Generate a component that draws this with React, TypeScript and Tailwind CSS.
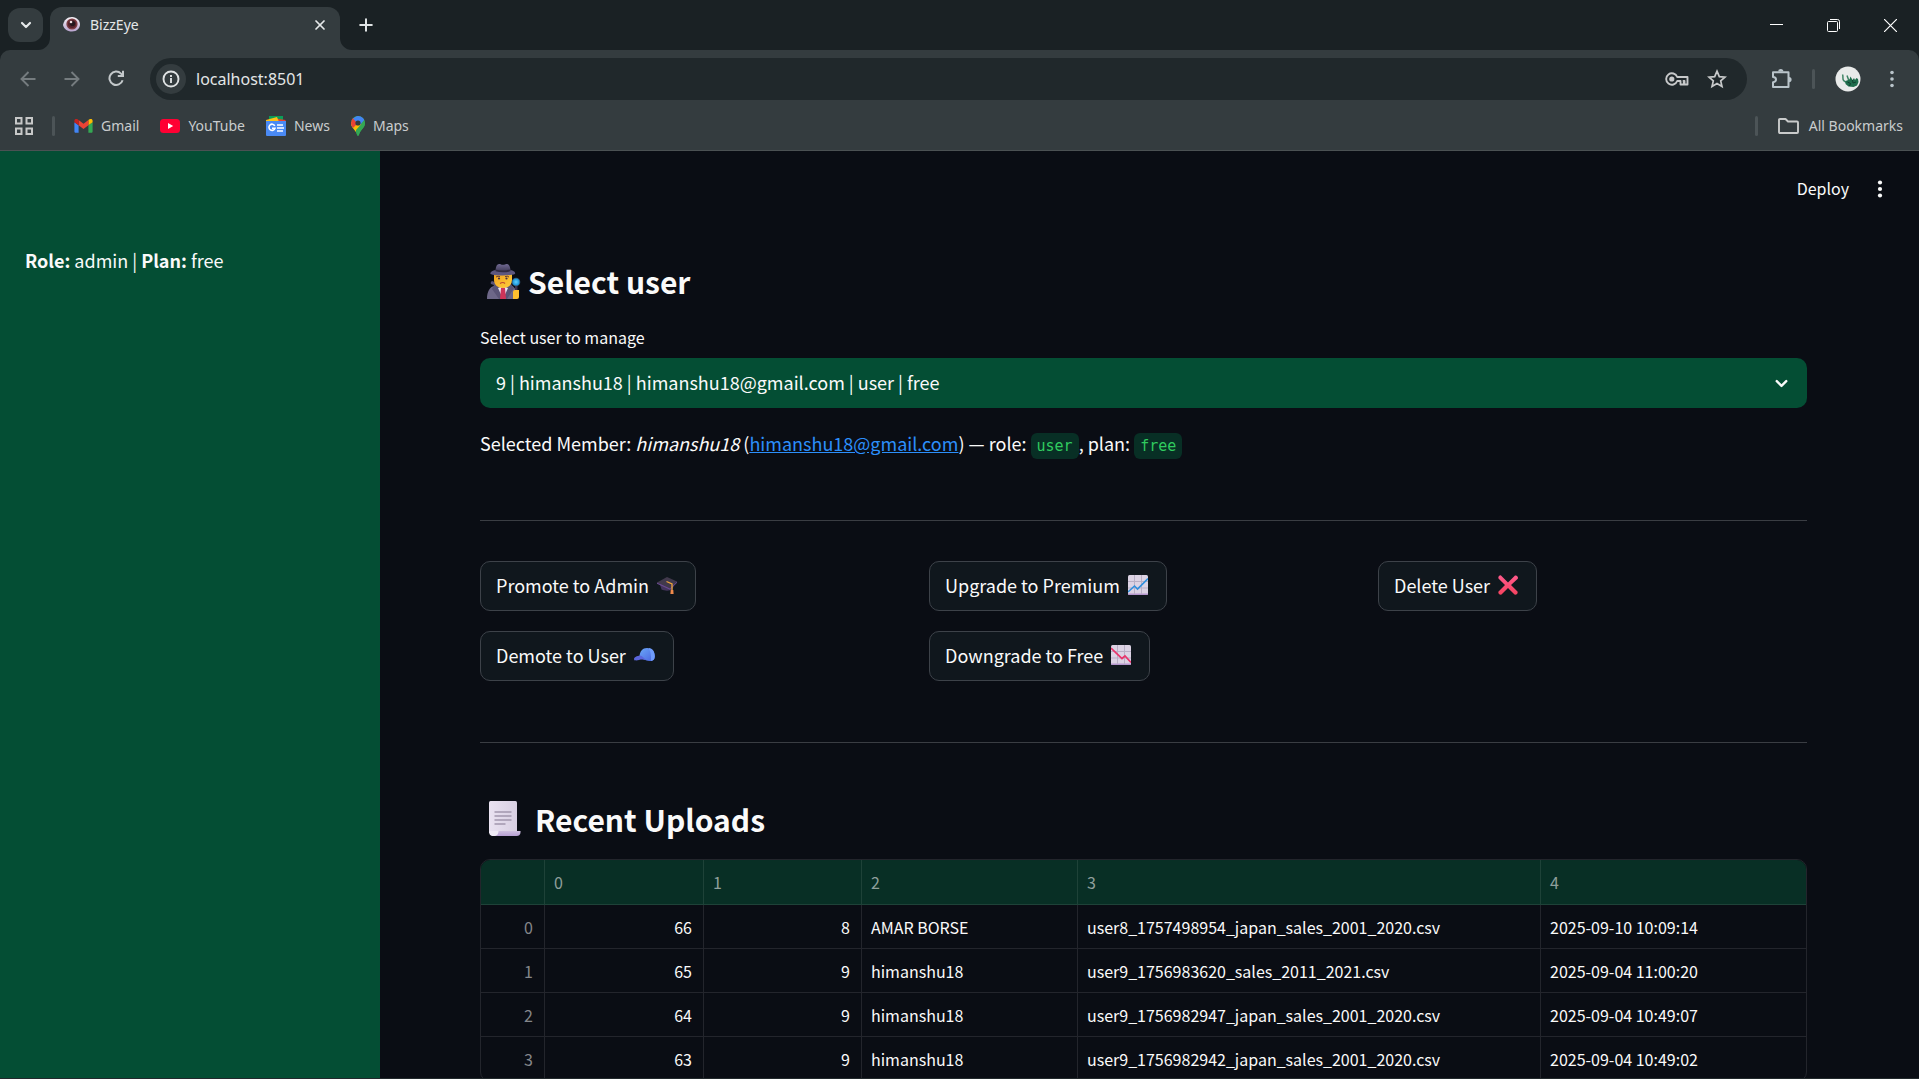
import React from "react";
import { Plus, X, ChevronDown } from "lucide-react";

const SANS = "font-['Noto_Sans_CJK_SC',sans-serif]";

function FavEye() {
  return (
    <svg viewBox="0 0 17 15" className="h-[15px] w-[17px]" aria-hidden="true">
      <defs>
        <linearGradient id="eyeWhite" x1="0" y1="0" x2="0" y2="1">
          <stop offset="0" stopColor="#f7f3f7" />
          <stop offset="1" stopColor="#b9a4cf" />
        </linearGradient>
      </defs>
      <path d="M0 8C1 3 4 0 9 0s8 4 8 7.500-3 7-8 7S1 12 0 8z" fill="url(#eyeWhite)" />
      <circle cx="9" cy="7" r="5.600" fill="#7b3b42" />
      <circle cx="9" cy="7" r="4" fill="#54222a" />
      <circle cx="9.500" cy="6.500" r="2.600" fill="#24171d" />
      <circle cx="8" cy="5" r="1.300" fill="#f0dfe2" />
    </svg>
  );
}

function ArrowIcon({ flip = false }: { flip?: boolean }) {
  return (
    <svg viewBox="0 0 16 16" className={flip ? "size-4 rotate-180" : "size-4"} fill="none" stroke="#757c7f" strokeWidth="1.900" aria-hidden="true">
      <path d="M15.500 8H1.800M8.500 1 1.500 8l7 7" />
    </svg>
  );
}

function ReloadIcon() {
  return (
    <svg viewBox="0 0 17 17" className="size-[17px]" fill="none" aria-hidden="true">
      <path d="M14.600 10.200A6.700 6.700 0 1 1 13 3.600l2 2" stroke="#c3c8ca" strokeWidth="2" />
      <path d="M16 .8V7H9.800V5H14V.8z" fill="#c3c8ca" />
    </svg>
  );
}

function InfoIcon() {
  return (
    <svg viewBox="0 0 18 18" className="size-[18px]" fill="none" aria-hidden="true">
      <circle cx="9" cy="9" r="7.500" stroke="#dfe2e3" strokeWidth="1.900" />
      <path d="M9 8v5M9 5v2" stroke="#dfe2e3" strokeWidth="1.900" strokeDasharray="5" />
    </svg>
  );
}

function KeyIcon() {
  return (
    <svg viewBox="0 0 24 14" className="h-3.5 w-6" fill="none" stroke="#c7c9ca" strokeWidth="1.900" aria-hidden="true">
      <path d="M12.200 5A5.700 5.700 0 1 0 12.200 9H15.500v3.500h3.300V9h-.3 1v3.500H22.500V5z" strokeLinejoin="round" />
      <circle cx="6.800" cy="7" r="2.600" fill="#c7c9ca" stroke="none" />
    </svg>
  );
}

function StarIcon() {
  return (
    <svg viewBox="0 0 20 20" className="size-5" fill="none" stroke="#c7c9ca" strokeWidth="1.700" aria-hidden="true">
      <path d="m10 2.200 2.300 5.400 5.700.5-4.300 3.800 1.300 5.600L10 14.500l-5 3L6.300 11.900 2 8.100l5.700-.5z" />
    </svg>
  );
}

function PuzzleIcon() {
  return (
    <svg viewBox="0 0 21 21" className="size-[21px]" fill="none" aria-hidden="true">
      <path
        d="M2 4.200h15.500v14.800H2v-4.800c4-.2 4-5 0-5.200z"
        stroke="#b9c4ca"
        strokeWidth="2"
        strokeLinejoin="round"
      />
      <path d="M7.200 3.500a2.600 2.600 0 0 1 5.200 0zM18 9a2.600 2.600 0 0 1 0 5.200z" fill="#b9c4ca" />
    </svg>
  );
}

function Dots({ color, r = 1.9 }: { color: string; r?: number }) {
  return (
    <svg viewBox="0 0 6 18" className="h-[18px] w-1.5" fill={color} aria-hidden="true">
      <circle cx="3" cy="2.500" r={r} />
      <circle cx="3" cy="9" r={r} />
      <circle cx="3" cy="15.500" r={r} />
    </svg>
  );
}

function Avatar() {
  return (
    <svg viewBox="0 0 26 26" className="size-[26px]" aria-hidden="true">
      <circle cx="13" cy="13" r="12.500" fill="#e9ebea" />
      <path d="M7.500 8.500c1.300 2.500-.8 4.500 1.500 6.500l2.500 1.500M12 9.500l1.500 4 2 2" fill="none" stroke="#3f8465" strokeWidth="1.500" />
      <path d="M10.500 15l4-1.500 1-3 2 3.500 1.500-2 1 2 1.500-2 1.500 1 .5 3-1.500 3.500-3.500 1.500-5-.5-3-2.500z" fill="#1f6d4c" />
      <path d="m12.500 16 3 1.500-1 2.500M17.500 14l.5 3 3-1" stroke="#11402f" fill="none" />
    </svg>
  );
}

function AppsIcon() {
  return (
    <svg viewBox="0 0 18 18" className="size-[18px]" fill="none" stroke="#c7c8c8" strokeWidth="2" aria-hidden="true">
      <path d="M1 1h5.500v5.500H1zM11.500 1H17v5.500h-5.500zM1 11.500h5.500V17H1zM11.500 11.500H17V17h-5.500z" />
    </svg>
  );
}

function GmailIcon() {
  return (
    <svg viewBox="0 0 52 40" className="h-3.5 w-[19px]" aria-hidden="true">
      <path d="M3.500 39H12V18L0 9v26.500C0 37.500 1.500 39 3.500 39z" fill="#4285f4" />
      <path d="M40 39h8.500c2 0 3.500-1.500 3.500-3.500V9l-12 9z" fill="#34a853" />
      <path d="M40 3v15l12-9V5c0-4.500-5-7-8.500-4.500z" fill="#fbbc04" />
      <path d="M12 18V3l14 10.500L40 3v15L26 28.500z" fill="#ea4335" />
      <path d="M0 5v4l12 9V3L8.500.5C5-2 0 .5 0 5z" fill="#c5221f" />
    </svg>
  );
}

function YouTubeIcon() {
  return (
    <svg viewBox="0 0 20 14" className="h-3.5 w-5" aria-hidden="true">
      <rect width="20" height="14" rx="3.500" fill="#ff0033" />
      <path d="M8 4v6l5.200-3z" fill="#fff" />
    </svg>
  );
}

function NewsIcon() {
  return (
    <svg viewBox="0 0 20 20" className="size-5" aria-hidden="true">
      <path d="M3 0h14v6H3z" fill="#0c9d58" />
      <path d="M10 2.500 19.500 4v4H10z" fill="#e8412f" />
      <path d="M0 4 11 1l2 5H0z" fill="#ffc017" />
      <path d="M0 5h20v14a1 1 0 0 1-1 1H1a1 1 0 0 1-1-1z" fill="#4a8af4" />
      <path d="M8.800 9.800A3.100 3.100 0 1 0 9 12.300H6" fill="none" stroke="#fff" strokeWidth="1.600" />
      <path d="M11 9h6M11 12h7M11 15h6" stroke="#fff" strokeWidth="1.500" />
    </svg>
  );
}

function MapsIcon() {
  return (
    <svg viewBox="0 0 14 20" className="h-5 w-3.5" aria-hidden="true">
      <defs>
        <clipPath id="pin">
          <path d="M7 0a7 7 0 0 1 7 7c0 3-1.500 4.500-3.500 7-1.500 2-2 3-2.500 4.800-.4 1.400-1.600 1.400-2 0C5.500 17 5 16 3.500 14 1.500 11.500 0 10 0 7a7 7 0 0 1 7-7z" />
        </clipPath>
      </defs>
      <g clipPath="url(#pin)">
        <path d="M0 0h14v20H0z" fill="#34a853" />
        <path d="M0 6h7l4 3-8 9-3-2z" fill="#fbbc04" />
        <path d="M14 3v17H5V14l8-9z" fill="#34a853" />
        <path d="M0 2h3l4 5-5 5-2-2z" fill="#ea4335" />
        <path d="M2 2.500 7-1h4l3 4-5 6-3-2z" fill="#4285f4" />
      </g>
      <circle cx="7" cy="7" r="2.600" fill="#343c3f" />
    </svg>
  );
}

function FolderIcon() {
  return (
    <svg viewBox="0 0 21 16" className="h-4 w-[21px]" fill="none" stroke="#c9cbcb" strokeWidth="1.900" strokeLinejoin="round" aria-hidden="true">
      <path d="M1 14V2q0-1 1-1h5.500l2.500 2.500H19q1 0 1 1V14q0 1-1 1H2q-1 0-1-1z" />
    </svg>
  );
}

function Detective() {
  return (
    <svg viewBox="0 0 34 36" className="h-9 w-[34px]" aria-hidden="true">
      <defs>
        <linearGradient id="hat" x1="0" y1="0" x2="0" y2="1">
          <stop offset="0" stopColor="#716a93" />
          <stop offset="1" stopColor="#3d3753" />
        </linearGradient>
        <linearGradient id="face" x1="0" y1="0" x2="1" y2="1">
          <stop offset="0" stopColor="#f2a01f" />
          <stop offset="1" stopColor="#ffcf3a" />
        </linearGradient>
        <radialGradient id="lens">
          <stop offset="0" stopColor="#5fd0ff" />
          <stop offset="1" stopColor="#178fd6" />
        </radialGradient>
      </defs>
      <path d="M0 36c0-8 3-12 7-13l9 4 9-4c4 2 5 6 5 13z" fill="#6d6788" />
      <path d="M5 18c-2 1-1 3-1 3l3 1-2 4 7 10h8l7-11-3-4 2-4-9 6z" fill="#5a5476" />
      <path d="m11 25 5 11 5-11-5-2z" fill="#e9e4f3" />
      <path d="m14 25 2-1 2 1 1 11h-6z" fill="#cf3459" />
      <path d="M7 10h18v7c0 5-4 8-9 8s-9-3-9-8z" fill="url(#face)" />
      <path d="M9 14q2-1.500 4-.3M18 13.700q2.500-1.200 4 .3" stroke="#6a3b2b" strokeWidth="1" fill="none" />
      <circle cx="12" cy="15.500" r="1.100" fill="#463044" />
      <circle cx="19.500" cy="15.500" r="1.100" fill="#463044" />
      <path d="M13 20.500q3-2 5 0" stroke="#bd4a31" strokeWidth="1.200" fill="none" />
      <path d="M8.500 7C9 3 10 1 12 1c2 0 2 .8 4 .8s2-1 4-.8c2 .3 3 2 3.500 6l.5 2H8z" fill="url(#hat)" />
      <path d="M3.500 11c-.8-2 2-3.500 5-4 5 1.200 10 1.200 15 0 3 .5 5.300 2 4.500 4-5 2-19.500 2-24.500 0z" fill="#5d5780" />
      <path d="M8.500 6.500q7 2 15 0v1.800q-8 2-15 0z" fill="#302b43" />
      <path d="M28 21h2.500v8H28z" fill="#3c304d" />
      <circle cx="29" cy="19" r="4.300" fill="#34546f" />
      <circle cx="29" cy="19" r="3.500" fill="url(#lens)" />
      <path d="M26 29q0-2 2-2h4v7q0 2-2 2h-4z" fill="#ffc02e" />
    </svg>
  );
}

function Scroll() {
  return (
    <svg viewBox="0 0 32 36" className="h-9 w-8" aria-hidden="true">
      <defs>
        <linearGradient id="page" x1="0" y1="0" x2="1" y2="0">
          <stop offset="0" stopColor="#e9e2f1" />
          <stop offset="1" stopColor="#d8cfe2" />
        </linearGradient>
        <linearGradient id="roll" x1="0" y1="0" x2="0" y2="1">
          <stop offset="0" stopColor="#cfc0e0" />
          <stop offset="1" stopColor="#b79fd3" />
        </linearGradient>
      </defs>
      <path d="M0 1.500Q0 0 1.500 0h25Q28 0 28 1.500V32H0z" fill="url(#page)" />
      <path d="M5 30h26.500q.5 5-4 5H5z" fill="url(#roll)" />
      <path d="M0 30h9.500c0 3-1.500 5-5 5S0 33 0 30z" fill="#efeaf5" />
      <path d="M5.500 11h17M5.500 15h17M5.500 19h17M5.500 23h11" stroke="#a197ad" strokeWidth="1.300" />
    </svg>
  );
}

function GradCap() {
  return (
    <svg viewBox="0 0 20 20" className="size-5" aria-hidden="true">
      <path d="M2.500 8h15l-2 6.500c-3 1.500-8 1.500-11 0z" fill="#43345c" />
      <path d="M0 7.500 10 2l10 4.500-7 7z" fill="#41394c" />
      <path d="m0 7.500 13 6 7-7v1.300l-7 7-13-6z" fill="#6b4b91" />
      <path d="m9.500 6.500 5.500 2.500v9" fill="none" stroke="#f0a63a" strokeWidth="1.300" />
      <path d="M13.700 15h2.600l.3 4h-3.200z" fill="#f08a4b" />
    </svg>
  );
}

function BallCap() {
  return (
    <svg viewBox="0 0 21 20" className="h-5 w-[21px]" aria-hidden="true">
      <defs>
        <linearGradient id="cap" x1="0" y1="0" x2="1" y2="1">
          <stop offset="0" stopColor="#6aa7f8" />
          <stop offset="1" stopColor="#4a63e0" />
        </linearGradient>
      </defs>
      <path d="M5.500 11C6 6 8.500 3 13 3s7.800 3.500 7.800 8.500c0 3-1.500 4-3.800 4.500-3 .5-8-2-11.500-3z" fill="url(#cap)" />
      <path d="M14.500 3q3 4 2.500 13 3.500-.5 3.800-4.500c0-5-2-8-6.300-8.500z" fill="#6f9cfb" />
      <path d="M6 10.500c-3 .3-6 2-6 3.500 0 2 3 1.500 5 1 3-.8 4-.5 8 .5-2.500-1.500-4-4.500-7-5z" fill="#5a66dc" />
    </svg>
  );
}

function ChartIcon({ down = false }: { down?: boolean }) {
  return (
    <svg viewBox="0 0 20 20" className="size-5" fill="none" aria-hidden="true">
      <rect width="20" height="20" rx="1.500" fill="#dcd3e4" />
      <path d="M0 18.500h20V19a1 1 0 0 1-1 1H1a1 1 0 0 1-1-1z" fill="#b596cd" />
      <path d="M6.500 0v19M13.500 0v19M0 6.500h20M0 13h20" stroke="#b9afc5" />
      {down ? (
        <path d="m0 3 11 10.500 3-2.500 6 6.500" stroke="#e8356b" strokeWidth="1.700" />
      ) : (
        <path d="m0 17 6.500-6 3 3L20 3.500" stroke="#2f8fdd" strokeWidth="1.600" />
      )}
    </svg>
  );
}

function CrossIcon() {
  return (
    <svg viewBox="0 0 20 20" className="size-5" aria-hidden="true">
      <defs>
        <linearGradient id="cross" x1="0" y1="0" x2="0" y2="1">
          <stop offset="0" stopColor="#ff5a8c" />
          <stop offset="1" stopColor="#f5435f" />
        </linearGradient>
      </defs>
      <path
        d="m3 .500 7 7 7-7q1.500-.5 2.500 1t0 2.500L13 10l6.500 6.500q.5 1.500-.5 2.500t-2.500.5L10 13l-6.500 6.500Q2 20 1 19t-.5-2.500L7 10 .5 3.500Q0 2 1 1T3 .500z"
        fill="url(#cross)"
      />
    </svg>
  );
}

function TabStrip() {
  return (
    <div className="flex h-[50px] items-end justify-between bg-[#1a2124] pl-2">
      <div className="flex items-end">
        <button aria-label="Search tabs" className="mb-2 flex h-[34px] w-[35px] items-center justify-center rounded-xl bg-[#343c3f] text-[#e6e9ea]">
          <ChevronDown className="size-4" strokeWidth={3.2} />
        </button>
        <div className="relative ml-[7px] flex h-[43px] w-[290px] items-center rounded-t-xl bg-[#343c3f] pr-3 pb-2 pl-[13px]">
          <svg viewBox="0 0 12 12" className="absolute bottom-0 -left-3 size-3" aria-hidden="true">
            <path d="M12 0v12H0A12 12 0 0 0 12 0z" fill="#343c3f" />
          </svg>
          <svg viewBox="0 0 12 12" className="absolute -right-3 bottom-0 size-3" aria-hidden="true">
            <path d="M0 0v12h12A12 12 0 0 1 0 0z" fill="#343c3f" />
          </svg>
          <FavEye />
          <span className="ml-2.5 flex-1 text-[14px] leading-5 text-[#e4e7e8]">BizzEye</span>
          <button aria-label="Close tab" className="text-[#e6e9ea]">
            <X className="size-4" strokeWidth={2.6} />
          </button>
        </div>
        <button aria-label="New tab" className="mb-[15px] ml-4 text-[#e0e4e5]">
          <Plus className="size-5" strokeWidth={2.4} />
        </button>
      </div>
      <div className="flex h-full items-center gap-11 pr-[22px] text-white">
        <button aria-label="Minimize">
          <svg viewBox="0 0 13 13" className="size-[13px]" aria-hidden="true"><path d="M0 5.500h13" stroke="currentColor" /></svg>
        </button>
        <button aria-label="Restore">
          <svg viewBox="0 0 13 13" className="size-[13px]" fill="none" stroke="currentColor" aria-hidden="true">
            <rect x=".5" y="2.500" width="10" height="10" rx="1" />
            <path d="M3 .5h7.500q2 0 2 2V10" />
          </svg>
        </button>
        <button aria-label="Close window">
          <svg viewBox="0 0 13 13" className="size-[13px]" stroke="currentColor" strokeWidth="1.200" aria-hidden="true"><path d="m0 0 13 13M13 0 0 13" /></svg>
        </button>
      </div>
    </div>
  );
}

function Toolbar() {
  return (
    <div className="bg-[#1a2124]">
      <div className="flex h-[57px] items-center rounded-t-[10px] bg-[#343c3f] pr-[21px] pl-5">
        <div className="flex w-[130px] items-center gap-7">
          <button aria-label="Back"><ArrowIcon /></button>
          <button aria-label="Forward"><ArrowIcon flip /></button>
          <button aria-label="Reload"><ReloadIcon /></button>
        </div>
        <div className="flex h-[42px] flex-1 items-center rounded-full bg-[#20282b] pr-5 pl-1.5">
          <button aria-label="Site information" className="flex size-[30px] items-center justify-center rounded-full bg-[#343c3f]">
            <InfoIcon />
          </button>
          <input
            aria-label="Address"
            defaultValue="localhost:8501"
            className="ml-2.5 min-w-0 flex-1 bg-transparent text-[16px] text-[#e3e6e7] outline-none"
          />
          <button aria-label="Passwords" className="mr-[18px]"><KeyIcon /></button>
          <button aria-label="Bookmark this page"><StarIcon /></button>
        </div>
        <button aria-label="Extensions" className="ml-6"><PuzzleIcon /></button>
        <div className="ml-5 h-5 w-[3px] rounded-full bg-[#4c5457]" />
        <button aria-label="Profile" className="ml-5"><Avatar /></button>
        <button aria-label="Browser menu" className="ml-[25px] flex w-3 justify-center"><Dots color="#b9c4ca" r={1.8} /></button>
      </div>
    </div>
  );
}

const bookmarks = [
  { label: "Gmail", icon: <GmailIcon /> },
  { label: "YouTube", icon: <YouTubeIcon /> },
  { label: "News", icon: <NewsIcon /> },
  { label: "Maps", icon: <MapsIcon /> },
];

function BookmarkBar() {
  return (
    <div className="flex h-11 items-center border-b border-[#4b5153] bg-[#343c3f] pr-4 pb-1.5 pl-[15px] text-[14px] text-[#c9cccd]">
      <button aria-label="Apps"><AppsIcon /></button>
      <div className="ml-[19px] h-5 w-[3px] rounded-full bg-[#4c5457]" />
      <nav className="ml-[19px] flex items-center gap-[21px]">
        {bookmarks.map((b) => (
          <a key={b.label} href="#" className="flex items-center gap-2">
            {b.icon}
            {b.label}
          </a>
        ))}
      </nav>
      <div className="ml-auto h-5 w-[3px] rounded-full bg-[#4c5457]" />
      <button className="ml-5 flex items-center gap-2.5">
        <FolderIcon />
        All Bookmarks
      </button>
    </div>
  );
}

function ActionButton({ label, icon }: { label: string; icon: React.ReactNode }) {
  return (
    <button className="flex h-[50px] items-center gap-2 rounded-[10px] border border-[#3d4249] bg-[#10171d] pr-[18px] pb-0.5 pl-[15px] text-[18px] leading-8">
      {label}
      {icon}
    </button>
  );
}

const rows = [
  ["66", "8", "AMAR BORSE", "user8_1757498954_japan_sales_2001_2020.csv", "2025-09-10 10:09:14"],
  ["65", "9", "himanshu18", "user9_1756983620_sales_2011_2021.csv", "2025-09-04 11:00:20"],
  ["64", "9", "himanshu18", "user9_1756982947_japan_sales_2001_2020.csv", "2025-09-04 10:49:07"],
  ["63", "9", "himanshu18", "user9_1756982942_japan_sales_2001_2020.csv", "2025-09-04 10:49:02"],
];

function UploadsTable() {
  return (
    <div className="mt-5 overflow-hidden rounded-[10px] border border-[#23252c]">
      <table className="w-full table-fixed border-separate border-spacing-0 text-[16px] leading-5">
        <colgroup>
          <col className="w-16" />
          <col className="w-[159px]" />
          <col className="w-[158px]" />
          <col className="w-[216px]" />
          <col className="w-[463px]" />
          <col />
        </colgroup>
        <thead>
          <tr className="h-[45px] bg-[#082f25] text-left text-[#8f9f9b]">
            <td className="border-r border-b border-[#1e4238]" />
            {["0", "1", "2", "3", "4"].map((h) => (
              <th key={h} scope="col" className="border-r border-b border-[#1e4238] px-[9px] font-normal last:border-r-0">
                {h}
              </th>
            ))}
          </tr>
        </thead>
        <tbody>
          {rows.map((r, i) => (
            <tr key={r[0]} className="h-11">
              <th scope="row" className="border-r border-b border-[#23252c] px-[11px] text-right font-normal text-[#84868a]">{i}</th>
              {r.map((c, j) => (
                <td
                  key={j}
                  className={
                    j < 2
                      ? "border-r border-b border-[#23252c] px-[11px] text-right"
                      : "border-r border-b border-[#23252c] px-[9px] last:border-r-0"
                  }
                >
                  {c}
                </td>
              ))}
            </tr>
          ))}
        </tbody>
      </table>
    </div>
  );
}

function Code({ children }: { children: React.ReactNode }) {
  return (
    <code className="rounded-md bg-[#082f25] px-1.5 py-1 font-['DejaVu_Sans_Mono',monospace] text-[15px] leading-5 text-[#30cb5f]">
      {children}
    </code>
  );
}

export default function App() {
  return (
    <div className="flex h-screen flex-col overflow-hidden border-b border-[#22292c] bg-[#0a0d14]">
      <header className="shrink-0 font-['Noto_Sans','Open_Sans',sans-serif]">
        <TabStrip />
        <Toolbar />
        <BookmarkBar />
      </header>
      <div className={`flex min-h-0 flex-1 text-[#fafafa] ${SANS}`}>
        <aside className="w-[380px] shrink-0 bg-[#044e34] px-[25px] pt-[93px] text-[18px] leading-8">
          <p>
            <strong>Role:</strong> admin | <strong>Plan:</strong> free
          </p>
        </aside>
        <main className="min-w-0 flex-1 overflow-hidden">
          <div className="flex h-[75px] items-center justify-end gap-7 pr-9">
            <button className="pb-0.5 text-[16px] leading-6">Deploy</button>
            <button aria-label="Main menu"><Dots color="#fafafa" r={2.1} /></button>
          </div>
          <div className="pr-28 pl-[100px]">
            <h3 className="mt-[35px] flex items-center gap-[7px] pl-[7px] text-[30px] leading-10 font-bold">
              <Detective />
              Select user
            </h3>
            <label htmlFor="member" className="mt-6 block text-[16px] leading-6">
              Select user to manage
            </label>
            <div className="relative mt-[9px]">
              <select id="member" className="h-[50px] w-full appearance-none rounded-[10px] bg-[#044e34] px-4 pb-0.5 text-[18px] outline-none">
                <option>9 | himanshu18 | himanshu18@gmail.com | user | free</option>
              </select>
              <ChevronDown className="pointer-events-none absolute top-4 right-4 size-[19px]" strokeWidth={3} />
            </div>
            <p className="mt-[19px] text-[18px] leading-8">
              Selected Member: <em>himanshu18</em> (
              <a href="mailto:himanshu18@gmail.com" className="text-[#2c8ffb] underline">himanshu18@gmail.com</a>) — role: <Code>user</Code>, plan:{" "}
              <Code>free</Code>
            </p>
            <hr className="mt-[61px] border-[#3a3d43]" />
            <div className="mt-10 grid grid-cols-3 gap-5">
              <div className="flex flex-col items-start gap-5">
                <ActionButton label="Promote to Admin" icon={<GradCap />} />
                <ActionButton label="Demote to User" icon={<BallCap />} />
              </div>
              <div className="flex flex-col items-start gap-5">
                <ActionButton label="Upgrade to Premium" icon={<ChartIcon />} />
                <ActionButton label="Downgrade to Free" icon={<ChartIcon down />} />
              </div>
              <div className="flex flex-col items-start gap-5">
                <ActionButton label="Delete User" icon={<CrossIcon />} />
              </div>
            </div>
            <hr className="mt-[61px] border-[#3a3d43]" />
            <h3 className="mt-14 flex items-center gap-3.5 pl-[9px] text-[30px] leading-10 font-bold">
              <Scroll />
              Recent Uploads
            </h3>
            <UploadsTable />
          </div>
        </main>
      </div>
    </div>
  );
}
